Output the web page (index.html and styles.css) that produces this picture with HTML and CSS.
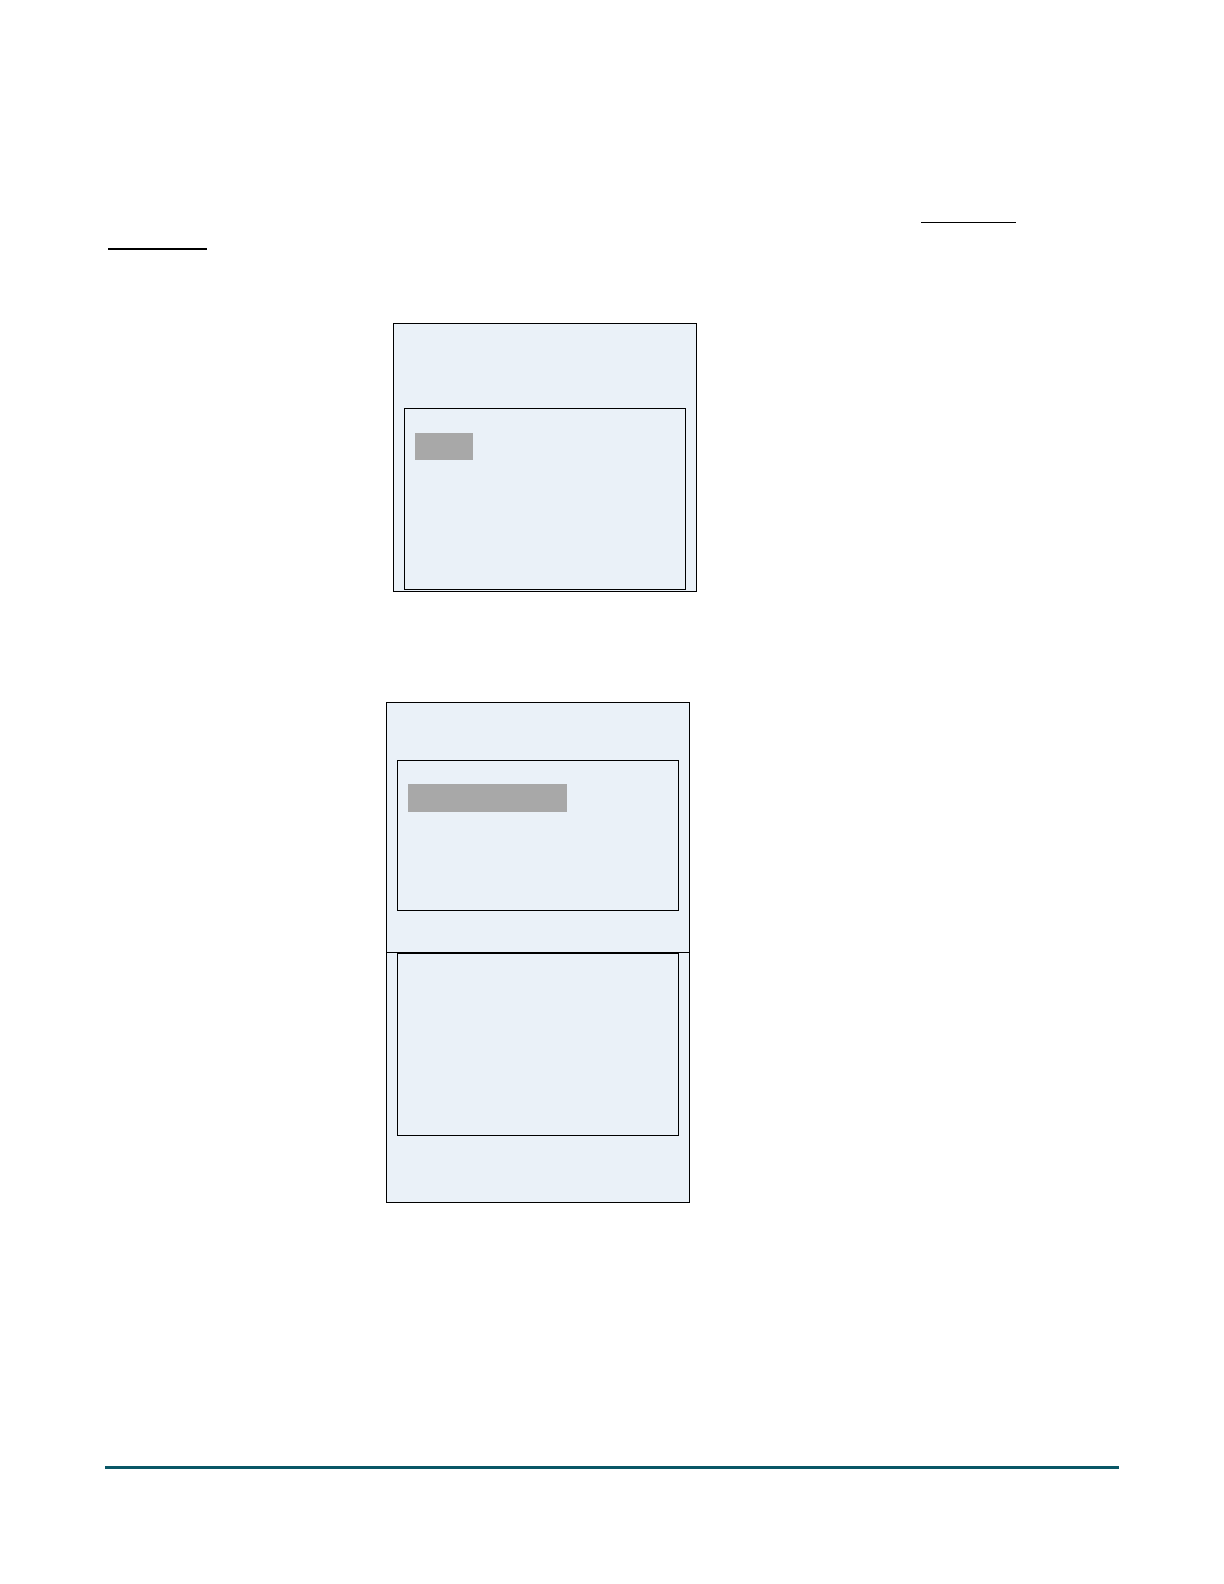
FILE: index.html
```html
<!DOCTYPE html>
<html lang="en">
<head>
<meta charset="utf-8">
<meta name="viewport" content="width=device-width, initial-scale=1">
<title>Document page</title>
<link rel="stylesheet" href="styles.css">
</head>
<body>
<main class="page">
  <div class="intro">
    <div class="rule rule-end"></div>
    <div class="rule rule-start"></div>
  </div>
  <section class="panel panel-first">
    <div class="cell cell-short">
      <div class="field field-tall"><div class="mark mark-small"></div></div>
    </div>
  </section>
  <section class="panel panel-second">
    <div class="cell cell-upper">
      <div class="field"><div class="mark mark-wide"></div></div>
    </div>
    <div class="cell cell-lower">
      <div class="field field-last"></div>
    </div>
  </section>
</main>
<footer class="footer"></footer>
</body>
</html>
```

FILE: styles.css
```css
* {
  box-sizing: border-box;
}

body {
  margin: 0;
  padding: 222px 105px 115px;
  background: #fff;
  font-family: "Liberation Sans", Arial, sans-serif;
}

.page {
  display: flex;
  flex-direction: column;
}

/* Underlines of the opening paragraph */
.intro {
  display: flex;
  flex-direction: column;
  gap: 25px;
  padding: 0 103px 0 3px;
}

.rule {
  background: #000;
}

.rule-end {
  align-self: flex-end;
  width: 95px;
  height: 1px;
}

.rule-start {
  width: 99px;
  height: 2px;
}

/* Bordered panels with nested fields */
.panel {
  width: 304px;
  max-width: 100%;
  border: 1px solid #000;
  background: #eaf1f8;
}

.panel-first {
  margin: 73px 0 0 288px;
}

.panel-second {
  margin: 110px 0 0 281px;
}

.cell {
  padding: 0 10px;
}

.cell-short {
  padding-top: 84px;
  padding-bottom: 1px;
}

.cell-upper {
  padding-top: 57px;
  padding-bottom: 41px;
  border-bottom: 1px solid #000;
}

.cell-lower {
  padding-bottom: 66px;
}

.field {
  min-height: 151px;
  padding: 23px 10px;
  border: 1px solid #000;
}

.field-tall {
  min-height: 182px;
  padding-top: 24px;
}

.field-last {
  min-height: 183px;
}

.mark {
  height: 27px;
  background: #a8a8a8;
}

.mark-small {
  width: 58px;
}

.mark-wide {
  width: 159px;
  height: 28px;
}

.footer {
  margin-top: 263px;
  border-top: 3px solid #095766;
}
```
